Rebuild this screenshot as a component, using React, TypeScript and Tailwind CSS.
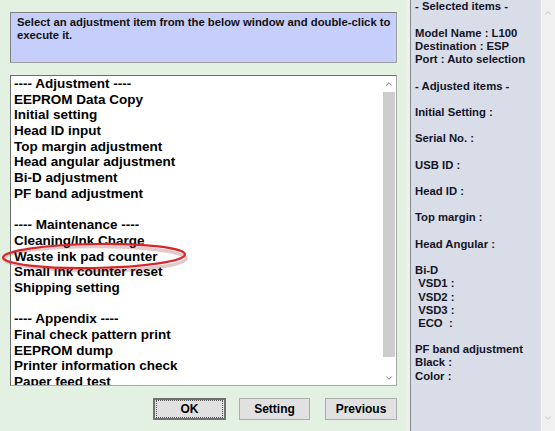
import { ChevronUp, ChevronDown } from 'lucide-react';

const listItems = [
  '---- Adjustment ----',
  'EEPROM Data Copy',
  'Initial setting',
  'Head ID input',
  'Top margin adjustment',
  'Head angular adjustment',
  'Bi-D adjustment',
  'PF band adjustment',
  '',
  '---- Maintenance ----',
  'Cleaning/Ink Charge',
  'Waste ink pad counter',
  'Small ink counter reset',
  'Shipping setting',
  '',
  '---- Appendix ----',
  'Final check pattern print',
  'EEPROM dump',
  'Printer information check',
  'Paper feed test',
];

const infoLines = [
  '- Selected items -',
  '',
  'Model Name : L100',
  'Destination : ESP',
  'Port : Auto selection',
  '',
  '- Adjusted items -',
  '',
  'Initial Setting :',
  '',
  'Serial No. :',
  '',
  'USB ID :',
  '',
  'Head ID :',
  '',
  'Top margin :',
  '',
  'Head Angular :',
  '',
  'Bi-D',
  ' VSD1 :',
  ' VSD2 :',
  ' VSD3 :',
  ' ECO  :',
  '',
  'PF band adjustment',
  'Black :',
  'Color :',
];

function WinButton({ label, width, focused }: { label: string; width: string; focused?: boolean }) {
  return (
    <button
      className={`${width} h-[22px] bg-[#e1e1e1] text-[12px] font-bold text-black ${
        focused ? 'border-2 border-[#707070]' : 'border border-[#adadad]'
      }`}
    >
      {focused ? (
        <span className="flex items-center justify-center h-full mx-[1px] border border-dotted border-[#555]">{label}</span>
      ) : (
        label
      )}
    </button>
  );
}

export default function App() {
  return (
    <div
      className="relative flex w-[555px] h-[431px] overflow-hidden bg-[#e3f1e3]"
      style={{ fontFamily: '"Liberation Sans", Arial, sans-serif' }}
    >
      {/* Left: adjustment menu */}
      <div className="w-[406px] shrink-0 flex flex-col pl-[10px] pr-[9px] pt-[12px]">
        <div className="h-[51px] bg-[#c6cffb] border border-[#a0a0a0] border-t-[#808080] border-l-[#808080] pl-[6px] pt-[3px] text-[11.3px] leading-[13px] font-bold text-[#111] whitespace-nowrap">
          Select an adjustment item from the below window and double-click to
          <br />
          execute it.
        </div>

        <div className="mt-[12px] h-[311px] flex bg-white border border-[#a8a8a8] border-t-[#6d6d6d] border-l-[#6d6d6d]">
          <div className="flex-1 pl-[3px] overflow-hidden text-[13.5px] leading-[15.7px] font-bold text-black">
            {listItems.map((item, i) => (
              <div key={i} className="h-[15.7px] whitespace-pre">
                {item}
              </div>
            ))}
          </div>
          <div className="w-[14px] flex flex-col bg-white">
            <div className="h-[16px] flex items-center justify-center text-[#606060]">
              <ChevronUp size={10} strokeWidth={2} />
            </div>
            <div className="h-[265px] bg-[#cdcdcd] mx-[1px]" />
            <div className="flex-1" />
            <div className="h-[15px] flex items-center justify-center text-[#606060]">
              <ChevronDown size={10} strokeWidth={2} />
            </div>
          </div>
        </div>

        <div className="mt-[12px] flex justify-end gap-[13px]">
          <WinButton label="OK" width="w-[73px]" focused />
          <WinButton label="Setting" width="w-[71px] mr-[2px]" />
          <WinButton label="Previous" width="w-[72px]" />
        </div>
      </div>

      {/* Separator */}
      <div className="w-[4px] bg-[#eef0ee]" />
      <div className="w-[1px] bg-[#8a8a8a]" />

      {/* Right: selected items panel */}
      <div className="w-[130px] bg-[#d8dde7] pl-[4px] pt-[0.4px] text-[11.3px] leading-[13.2px] font-bold text-[#141428]">
        {infoLines.map((line, i) => (
          <div key={i} className="h-[13.2px] whitespace-pre">
            {line}
          </div>
        ))}
      </div>
      <div className="flex-1 bg-[#f0f0f0] flex flex-col justify-between items-center py-[8px] text-[#bdbdbd]">
        <ChevronUp size={10} strokeWidth={2} />
        <ChevronDown size={10} strokeWidth={2} />
      </div>

      {/* Red highlight around "Waste ink pad counter" */}
      <svg className="absolute left-0 top-[240px]" width="192" height="34" viewBox="0 0 192 34">
        <ellipse cx="94" cy="17" rx="91" ry="12" fill="none" stroke="#8a2a2a" strokeOpacity="0.25" strokeWidth="3.5" transform="translate(1 1.5)" />
        <ellipse cx="94" cy="16" rx="91" ry="12" fill="none" stroke="#d8262a" strokeWidth="2.2" transform="rotate(-1 94 16)" />
      </svg>
    </div>
  );
}
